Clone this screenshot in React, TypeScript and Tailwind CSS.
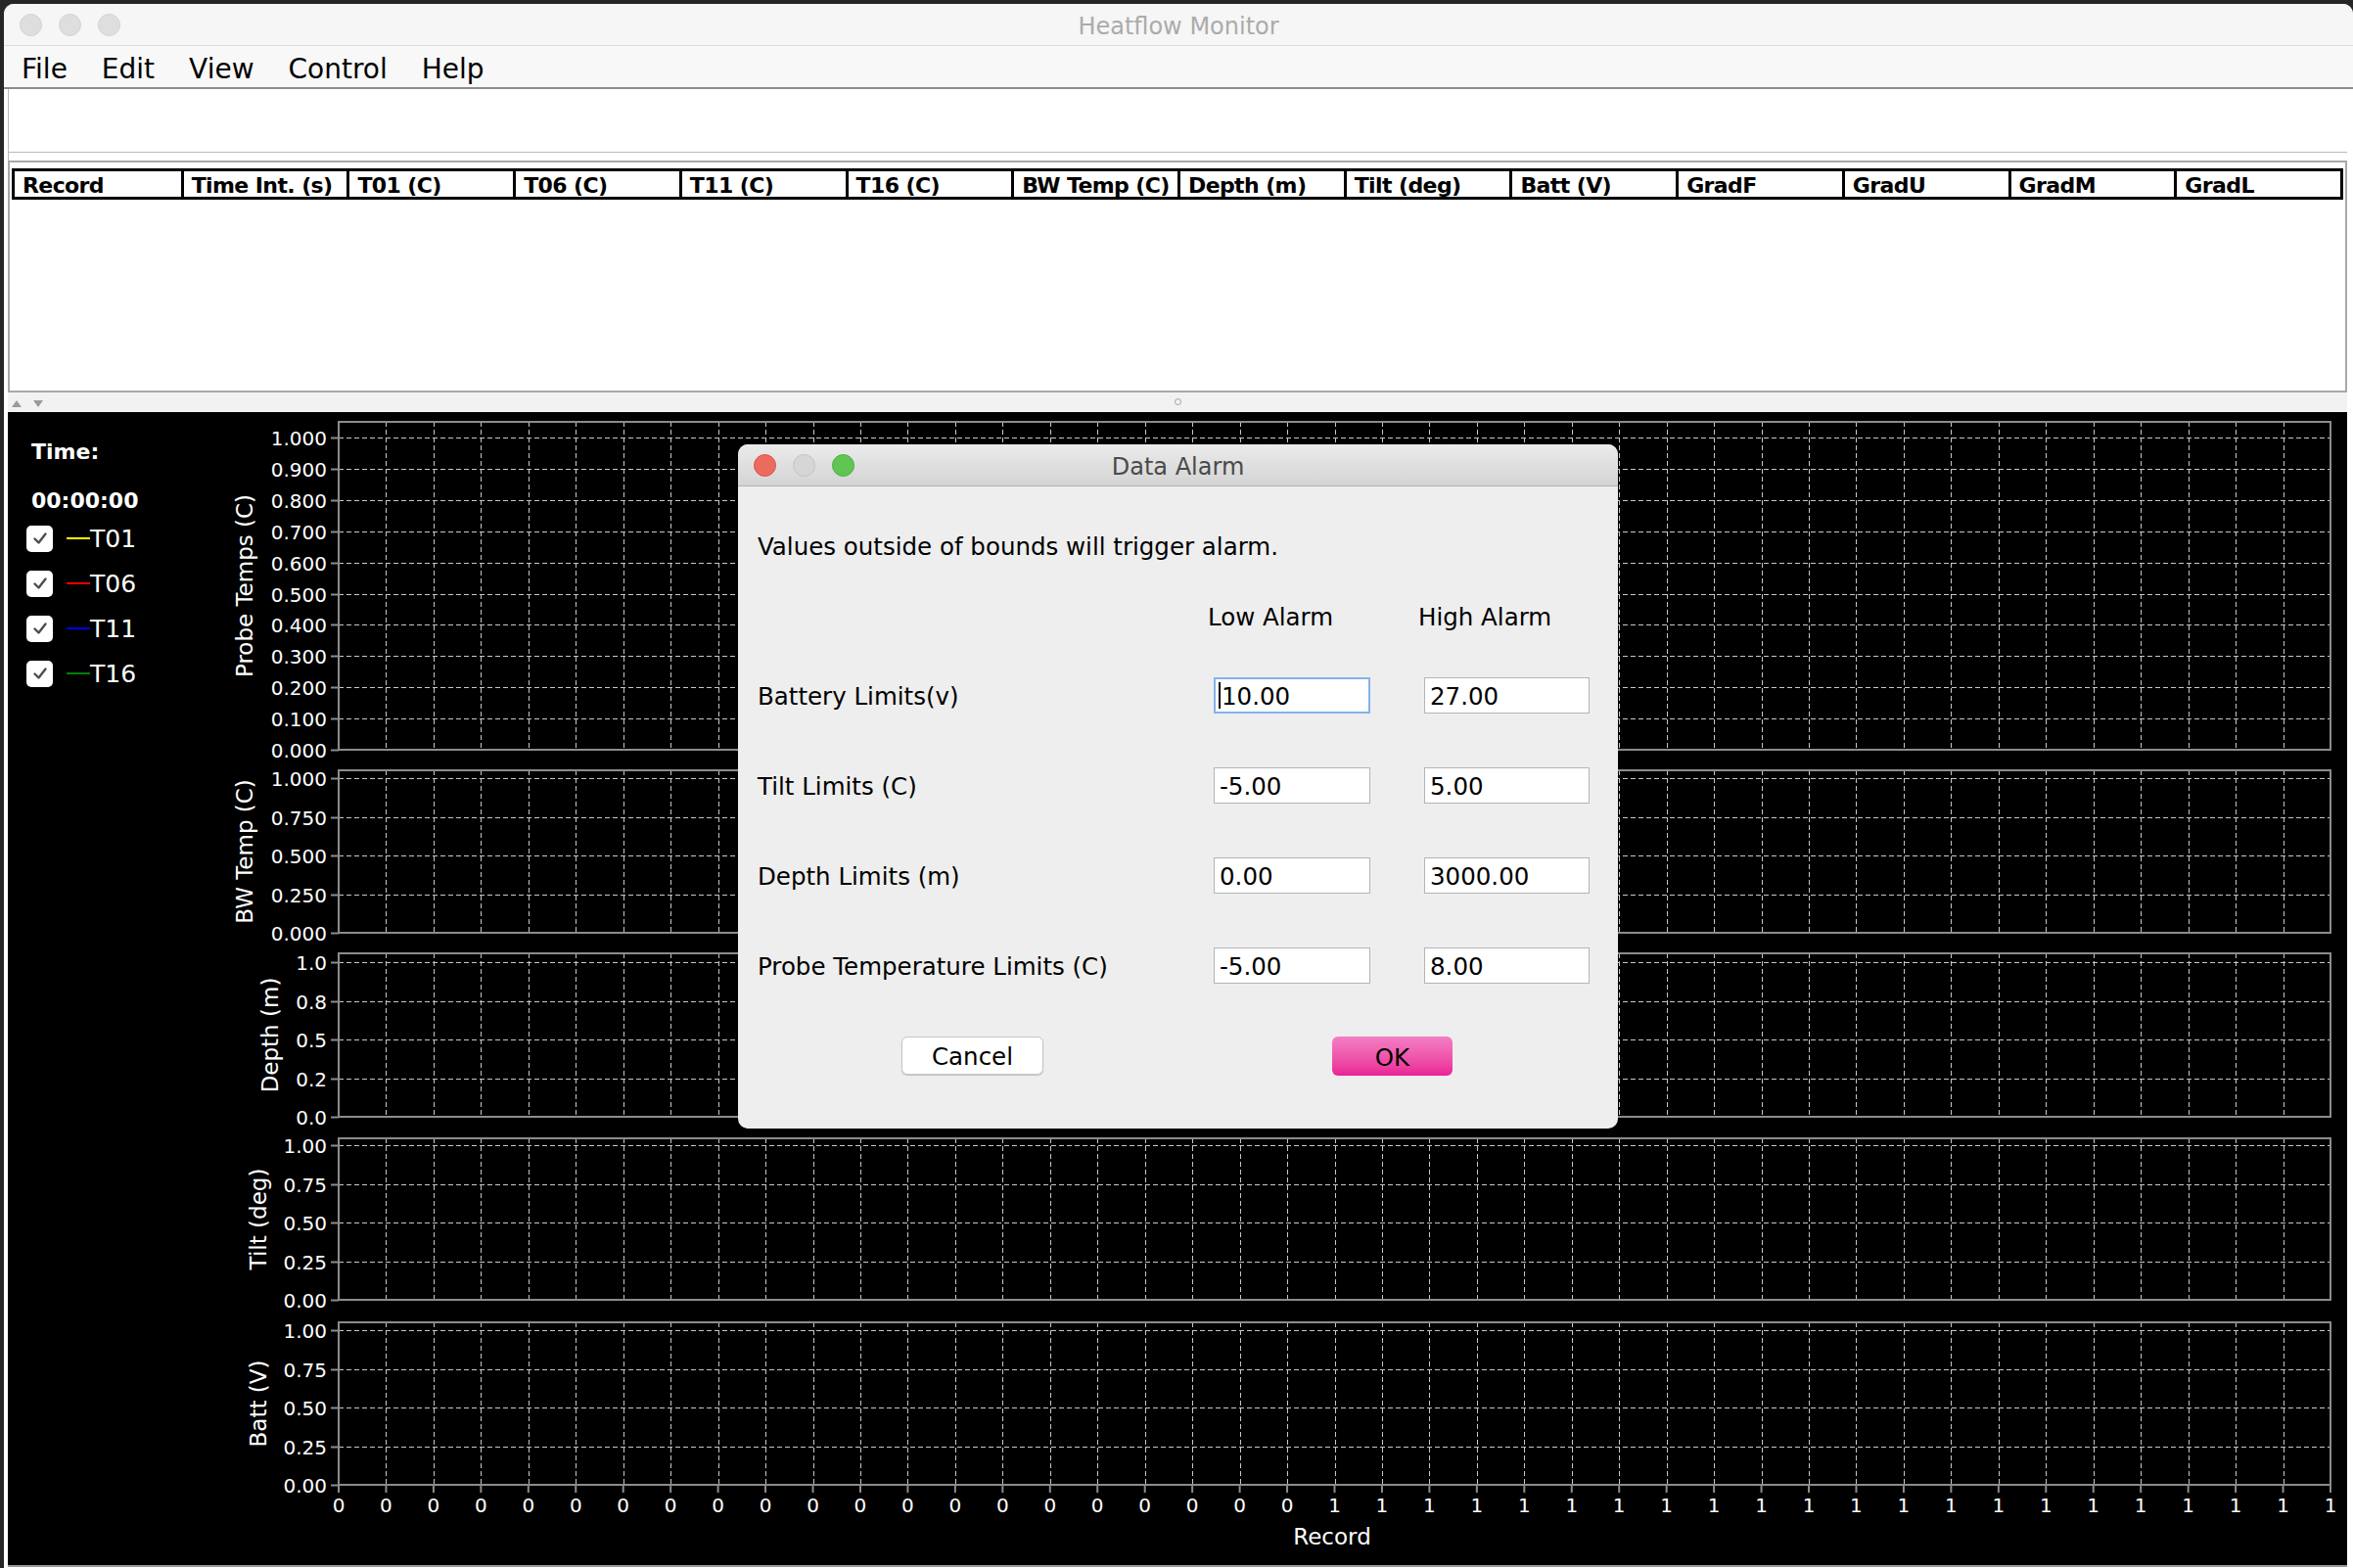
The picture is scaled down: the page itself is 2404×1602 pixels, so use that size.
import React from "react";

const COLUMNS = [
  "Record",
  "Time Int. (s)",
  "T01 (C)",
  "T06 (C)",
  "T11 (C)",
  "T16 (C)",
  "BW Temp (C)",
  "Depth (m)",
  "Tilt (deg)",
  "Batt (V)",
  "GradF",
  "GradU",
  "GradM",
  "GradL",
];

const MENU = ["File", "Edit", "View", "Control", "Help"];

const PROBES = [
  { name: "T01", color: "#ffff00" },
  { name: "T06", color: "#ff0000" },
  { name: "T11", color: "#0000ff" },
  { name: "T16", color: "#008000" },
];

// chart geometry in page coordinates, shifted into the svg below
const OX = 208;
const OY = 422;
const PL = 346;
const PR = 2381;
const XSTEP = (PR - PL) / 42;
const XS = Array.from({ length: 43 }, (_, i) => PL + i * XSTEP);

const quarter = (d: number) =>
  [1, 0.75, 0.5, 0.25, 0].map((v) => v.toFixed(d));

const CHARTS = [
  {
    top: 432,
    y1: 448,
    y0: 767,
    labels: Array.from({ length: 11 }, (_, i) => ((10 - i) / 10).toFixed(3)),
    title: "Probe Temps (C)",
    tx: 250,
  },
  { top: 788, y1: 796, y0: 954, labels: quarter(3), title: "BW Temp (C)", tx: 250 },
  {
    top: 975,
    y1: 984,
    y0: 1142,
    labels: ["1.0", "0.8", "0.5", "0.2", "0.0"],
    title: "Depth (m)",
    tx: 276,
  },
  { top: 1164, y1: 1171, y0: 1329, labels: quarter(2), title: "Tilt (deg)", tx: 264 },
  { top: 1352, y1: 1360, y0: 1518, labels: quarter(2), title: "Batt (V)", tx: 264 },
];

const LIMITS = [
  { label: "Battery Limits(v)", low: "10.00", high: "27.00", focus: true },
  { label: "Tilt Limits (C)", low: "-5.00", high: "5.00" },
  { label: "Depth Limits (m)", low: "0.00", high: "3000.00" },
  { label: "Probe Temperature Limits (C)", low: "-5.00", high: "8.00" },
];

const Lights = ({ active }: { active?: boolean }) => (
  <div className="flex items-center gap-[17px]">
    {active ? (
      <>
        <span className="h-[23px] w-[23px] rounded-full border border-[#d9534a] bg-[#ed6a5e]" />
        <span className="h-[23px] w-[23px] rounded-full border border-[#c4c4c4] bg-[#d6d6d6]" />
        <span className="h-[23px] w-[23px] rounded-full border border-[#4fae42] bg-[#61c554]" />
      </>
    ) : (
      <>
        <span className="h-[23px] w-[23px] rounded-full border border-[#d2d2d2] bg-[#dedede]" />
        <span className="h-[23px] w-[23px] rounded-full border border-[#d2d2d2] bg-[#dedede]" />
        <span className="h-[23px] w-[23px] rounded-full border border-[#d2d2d2] bg-[#dedede]" />
      </>
    )}
  </div>
);

const Charts = () => (
  <svg
    width={2190}
    height={1178}
    className="block shrink-0"
    fontFamily="'DejaVu Sans', sans-serif"
  >
    {CHARTS.map((c) => {
      const n = c.labels.length - 1;
      const step = (c.y0 - c.y1) / n;
      return (
        <g key={c.title}>
          {XS.slice(1, 42).map((x) => (
            <line
              key={x}
              x1={Math.round(x - OX) + 0.5}
              x2={Math.round(x - OX) + 0.5}
              y1={c.top - OY}
              y2={c.y0 - OY}
              stroke="#c8c8c8"
              strokeDasharray="5 3"
              shapeRendering="crispEdges"
            />
          ))}
          {c.labels.map((label, i) => {
            const y = Math.round(c.y1 + i * step - OY) + 0.5;
            return (
              <g key={label + i}>
                {i < n ? (
                  <line
                    x1={PL - OX}
                    x2={PR - OX}
                    y1={y}
                    y2={y}
                    stroke="#c8c8c8"
                    strokeDasharray="5 3"
                    shapeRendering="crispEdges"
                  />
                ) : null}
                <line
                  x1={338 - OX}
                  x2={PL - OX}
                  y1={y}
                  y2={y}
                  stroke="#8c8c8c"
                  strokeWidth={2}
                />
                <text
                  x={334 - OX}
                  y={y}
                  dy="0.36em"
                  textAnchor="end"
                  fontSize={20}
                  fill="#ffffff"
                >
                  {label}
                </text>
              </g>
            );
          })}
          <rect
            x={PL - OX}
            y={c.top - OY}
            width={PR - PL}
            height={c.y0 - c.top}
            fill="none"
            stroke="#8c8c8c"
            strokeWidth={2}
          />
          <text
            transform={`translate(${c.tx - OX},${(c.top + c.y0) / 2 - OY}) rotate(-90)`}
            textAnchor="middle"
            dy="0.36em"
            fontSize={23}
            fill="#ffffff"
          >
            {c.title}
          </text>
        </g>
      );
    })}
    {XS.map((x, i) => (
      <g key={i}>
        <line
          x1={x - OX}
          x2={x - OX}
          y1={1518 - OY}
          y2={1526 - OY}
          stroke="#8c8c8c"
          strokeWidth={2}
        />
        <text
          x={x - OX}
          y={1539 - OY}
          dy="0.36em"
          textAnchor="middle"
          fontSize={20}
          fill="#ffffff"
        >
          {i < 21 ? "0" : "1"}
        </text>
      </g>
    ))}
    <text
      x={1361 - OX}
      y={1571 - OY}
      dy="0.36em"
      textAnchor="middle"
      fontSize={23}
      fill="#ffffff"
    >
      Record
    </text>
  </svg>
);

const Legend = () => (
  <div className="w-[200px] shrink-0 pt-[27px] pl-[19px] text-white">
    <div className="pl-[5px] text-[22px] font-bold leading-[28px]">Time:</div>
    <div className="mt-[22px] pl-[5px] text-[22px] font-bold leading-[28px]">
      00:00:00
    </div>
    <div className="mt-[1px]">
      {PROBES.map((p) => (
        <div key={p.name} className="flex h-[46px] items-center">
          <span className="flex h-[27px] w-[27px] items-center justify-center rounded-[5px] bg-white">
            <svg width="18" height="18" viewBox="0 0 18 18">
              <path
                d="M3.5 9.5l4 4 7-9"
                fill="none"
                stroke="#4d4d4d"
                strokeWidth="2.4"
                strokeLinecap="round"
                strokeLinejoin="round"
              />
            </svg>
          </span>
          <span
            className="ml-[14px] h-[2px] w-[24px]"
            style={{ backgroundColor: p.color }}
          />
          <span className="text-[25px] leading-none">{p.name}</span>
        </div>
      ))}
    </div>
  </div>
);

const Field = ({ value, focus }: { value: string; focus?: boolean }) => (
  <div
    className={
      focus
        ? "flex h-[37px] items-center border-2 border-[#84b2ea] bg-white pl-[3px] pt-[3px] text-black"
        : "flex h-[37px] items-center border border-[#b4b4b4] bg-white pl-[5px] pt-[3px] text-black"
    }
  >
    {focus ? <span className="mr-[1px] -mt-[3px] h-[27px] w-[2px] bg-black" /> : null}
    <span className="leading-none">{value}</span>
  </div>
);

const DataAlarm = () => (
  <div className="absolute left-[754px] top-[454px] flex h-[699px] w-[899px] flex-col overflow-hidden rounded-[10px] bg-[#eeeeee] text-[24.5px] leading-[30px] text-black">
    <div className="relative flex h-[43px] shrink-0 items-center border-b border-[#b2b2b2] bg-gradient-to-b from-[#ebebeb] to-[#d4d4d4] pl-[16px]">
      <Lights active />
      <div className="absolute inset-0 flex items-center justify-center pt-[4px] text-[24px] text-[#4a4a4a]">
        Data Alarm
      </div>
    </div>
    <div className="flex flex-col pl-[20px] pt-[47px]">
      <div className="leading-[30px]">Values outside of bounds will trigger alarm.</div>
      <div className="mt-[42px] grid grid-cols-[411px_160px_169px] gap-x-[55px] leading-[30px]">
        <div />
        <div className="-ml-[6px] whitespace-nowrap">Low Alarm</div>
        <div className="-ml-[6px] whitespace-nowrap">High Alarm</div>
      </div>
      <div className="mt-[46px] grid grid-cols-[411px_160px_169px] items-center gap-x-[55px] gap-y-[55px]">
        {LIMITS.map((row) => (
          <React.Fragment key={row.label}>
            <div className="flex h-[37px] items-center whitespace-nowrap pt-[3px]">
              {row.label}
            </div>
            <Field value={row.low} focus={row.focus} />
            <Field value={row.high} />
          </React.Fragment>
        ))}
      </div>
      <div className="mt-[54px] flex">
        <div className="ml-[147px] flex h-[39px] w-[145px] items-center justify-center rounded-[6px] border border-[#c6c6c6] bg-white pt-[3px] shadow-[0_1px_1px_rgba(0,0,0,0.18)]">
          Cancel
        </div>
        <div className="ml-[295px] flex h-[40px] w-[123px] items-center justify-center rounded-[6px] bg-gradient-to-b from-[#f27ec4] to-[#ea1f96] pt-[3px]">
          OK
        </div>
      </div>
    </div>
  </div>
);

export default function App() {
  return (
    <div className="relative h-[1602px] w-[2404px] overflow-hidden bg-[#262626] pl-[4px] pt-[4px] font-['DejaVu_Sans',sans-serif]">
      <div className="flex h-[1598px] w-[2400px] flex-col overflow-hidden rounded-t-[10px] bg-white">
        <div className="relative flex h-[43px] shrink-0 items-center border-b border-[#dcdcdc] bg-[#f6f6f6] pl-[16px]">
          <Lights />
          <div className="absolute inset-0 flex items-center justify-center pt-[4px] text-[24px] text-[#ababab]">
            Heatflow Monitor
          </div>
        </div>
        <div className="flex h-[44px] shrink-0 items-center gap-[35px] border-b-2 border-[#8c8c8c] bg-[#f8f8f8] pl-[18px] pt-[5px] text-[28px] text-black">
          {MENU.map((m) => (
            <span key={m}>{m}</span>
          ))}
        </div>
        <div className="flex flex-1 flex-col pl-[4px] pr-[6px]">
          <div className="h-[65px] shrink-0 border-b border-l border-[#b8b8b8] bg-white" />
          <div className="h-[8px] shrink-0 border-l border-[#b8b8b8]" />
          <div className="h-[237px] shrink-0 border-2 border-[#a8a8a8] bg-white px-[2px] pt-[6px]">
            <div className="grid h-[32px] grid-cols-14 border-[3px] border-black">
              {COLUMNS.map((col, i) => (
                <div
                  key={col}
                  className={
                    i === 0
                      ? "flex items-center overflow-hidden whitespace-nowrap pl-[8px] pt-[2px] text-[22px] font-bold tracking-[-0.6px] text-black"
                      : "flex items-center overflow-hidden whitespace-nowrap border-l-[3px] border-black pl-[8px] pt-[2px] text-[22px] font-bold tracking-[-0.6px] text-black"
                  }
                >
                  {col}
                </div>
              ))}
            </div>
          </div>
          <div className="relative h-[20px] shrink-0 bg-[#f2f2f2]">
            <svg
              width="40"
              height="12"
              viewBox="0 0 40 12"
              className="absolute left-[0px] top-[5px]"
            >
              <path d="M4 10 L9 3 L14 10 Z" fill="#9a9a9a" />
              <path d="M26 3 L36 3 L31 10 Z" fill="#9a9a9a" />
            </svg>
            <span className="absolute left-[1192px] top-[6px] h-[7px] w-[7px] rounded-full border border-[#a0a0a0]" />
          </div>
          <div className="flex h-[1178px] shrink-0 bg-black">
            <Legend />
            <Charts />
          </div>
          <div className="h-[2px] shrink-0 bg-[#9a9a9a]" />
        </div>
      </div>
      <DataAlarm />
    </div>
  );
}
